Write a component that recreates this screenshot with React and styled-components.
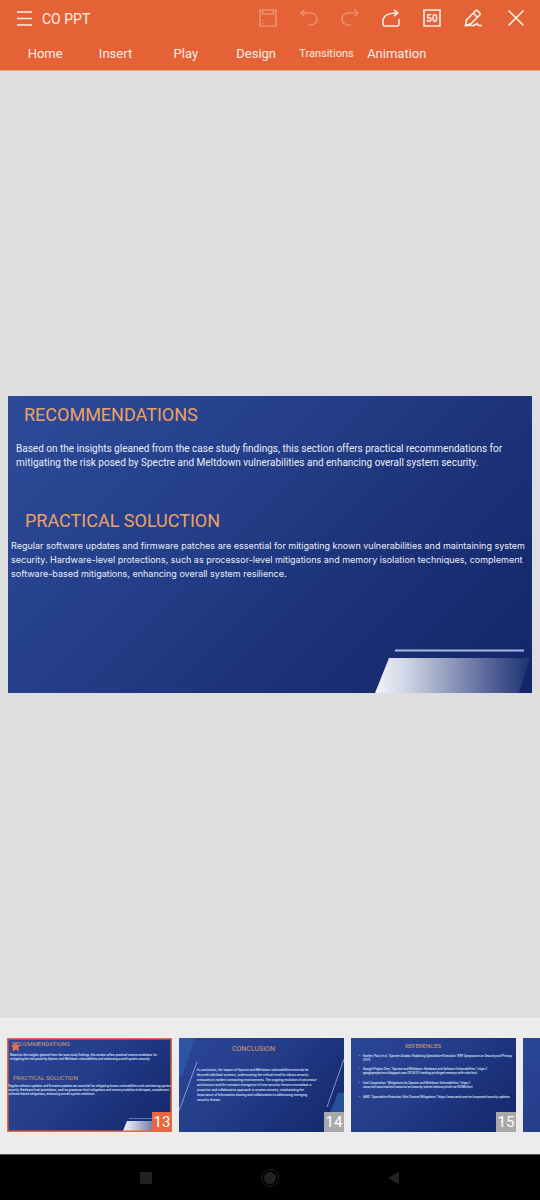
import React from "react";
import styled, { createGlobalStyle } from "styled-components";

const GlobalStyle = createGlobalStyle`
  *, *::before, *::after { box-sizing: border-box; }
  body { margin: 0; background: #dedede; font-family: Roboto, "Liberation Sans", sans-serif; }
  h1, h2, h3, p, ul { margin: 0; padding: 0; font-weight: 400; }
  button { font: inherit; color: inherit; background: none; border: 0; padding: 0; cursor: pointer; }
`;

const Page = styled.div`
  min-height: 100vh;
  display: flex;
  flex-direction: column;
  overflow: hidden;
`;

const Header = styled.header`
  background: #e46236;
  color: #fdeee6;
  border-bottom: 1px solid #e8a78e;
`;

const TitleBar = styled.div`
  height: 36px;
  padding: 0 12px;
  display: flex;
  align-items: center;
`;

const DocTitle = styled.h1`
  flex: 1;
  padding-left: 6px;
  font-size: 14px;
  line-height: 16px;
  padding-top: 2px;
`;

const ToolGroup = styled.div`
  display: flex;
  gap: 17px;
  margin-right: 19px;
`;

const IconButton = styled.button`
  width: 24px;
  height: 24px;
  display: grid;
  place-items: center;
  &:disabled { opacity: 0.32; }
  svg { display: block; }
`;

const Tabs = styled.nav`
  display: flex;
  padding: 1px 20% 0 10px;
  height: 34px;
`;

const Tab = styled.button`
  flex: 1 1 0;
  min-width: 0;
  text-align: center;
  white-space: nowrap;
  font-size: ${(p) => (p.$small ? 11 : 13)}px;
  line-height: 16px;
`;

const Stage = styled.main`
  flex: 1;
  display: flex;
  align-items: center;
  padding: 0 8px;
  background: #dedede;
`;

const SlideFrame = styled.article`
  position: relative;
  width: 100%;
  aspect-ratio: 524 / 297;
  overflow: hidden;
  color: #e9eefb;
  background: linear-gradient(135deg, #2e4b9a 0%, #233d86 42%, #1a2f75 72%, #12256a 100%);
`;

const Art = styled.svg`
  position: absolute;
  inset: 0;
  width: 100%;
  height: 100%;
`;

const SlideBody = styled.div`
  position: relative;
  padding: 8px 0 0 3px;
`;

const SlideHeading = styled.h2`
  padding-left: ${(p) => p.$indent}px;
  color: #eca262;
  font-size: 18px;
  line-height: 22px;
`;

const SlideText = styled.p`
  padding: ${(p) => p.$pad};
  font-family: ${(p) => (p.$compact ? "Inter, Roboto, sans-serif" : "inherit")};
  font-size: ${(p) => (p.$compact ? 9 : 10)}px;
  line-height: 14px;
  white-space: nowrap;
`;

const Line = styled.span`
  display: block;
`;

const Strip = styled.footer`
  display: flex;
  gap: 7px;
  height: 136px;
  padding: 20px 0 0 7px;
  background: #ececec;
  overflow: hidden;
`;

const Thumb = styled.button`
  position: relative;
  flex: 0 0 165px;
  height: 94px;
  overflow: hidden;
  text-align: left;
  color: #dfe6fa;
  background: linear-gradient(135deg, #2b4696 0%, #233d8a 45%, #1a3079 72%, #14286c 100%);
  display: flex;
  flex-direction: column;
  justify-content: flex-start;
`;

const SelectedRing = styled.span`
  position: absolute;
  inset: 0;
  border: 1px solid #e9673f;
  box-shadow: inset 0 0 0 1px #e9673f88;
`;

const ThumbHeading = styled.span`
  display: block;
  position: relative;
  font-size: ${(p) => p.$size || 6}px;
  line-height: 8px;
  color: #dc9a72;
  padding: ${(p) => p.$pad};
`;

const ThumbText = styled.span`
  display: block;
  position: relative;
  font-family: ${(p) => (p.$wide ? "Inter, Roboto, sans-serif" : "inherit")};
  font-weight: ${(p) => (p.$wide ? 600 : 500)};
  font-size: 3px;
  line-height: ${(p) => p.$lead || 4}px;
  white-space: nowrap;
  padding: ${(p) => p.$pad};
`;

const RefItem = styled.span`
  display: flex;
  gap: 3px;
  margin-bottom: ${(p) => p.$gap}px;
`;

const Badge = styled.span`
  position: absolute;
  right: 0;
  bottom: 0;
  width: 20px;
  height: 20px;
  text-align: center;
  font-size: 15px;
  line-height: 20px;
  color: #fff;
  background: ${(p) => (p.$active ? "#e9673f" : "#a9a9a9")};
`;

const StarMark = styled.svg`
  position: absolute;
  left: 3px;
  top: 3px;
  width: 12px;
  height: 12px;
`;

const NavBar = styled.nav`
  height: 46px;
  display: flex;
  justify-content: space-between;
  align-items: center;
  padding: 0 25%;
  background: #000;
  border-top: 1px solid #555;
`;

const NavButton = styled.button`
  width: 22px;
  height: 22px;
  svg { display: block; }
`;

const Glyph = ({ children, size = 20 }) => (
  <svg width={size} height={size} viewBox="0 0 20 20" fill="none" stroke="currentColor" strokeWidth="1.6" aria-hidden="true">
    {children}
  </svg>
);

const tools = [
  { name: "Save", disabled: true, icon: <><path d="M2 2h16v16H2z" /><path d="M4.500 2v4h11V2M5 12v1M5 15v1" /></> },
  { name: "Undo", disabled: true, icon: <><path d="M5.500 1.500 2 5l3.500 3.500" /><path d="M2 5h10a6 6 0 0 1 0 12H9" /></> },
  { name: "Redo", disabled: true, icon: <><path d="m14.500 1.500 3.500 3.500-3.500 3.500" /><path d="M18 5H8a6 6 0 0 0 0 12H11" /></> },
  { name: "Share", icon: <><path d="M2 11v5q0 2 2 2h12q2 0 2-2v-5" /><path d="M2 11.500C3 7 7 5 16.500 5M13 1.800 16.800 5 13 8.200" /></> },
  {
    name: "Slides",
    icon: <><path d="M2 2h16v16H2z" /><text x="10" y="13.500" fontSize="10" fontWeight="700" textAnchor="middle" fill="currentColor" stroke="none">50</text></>,
  },
  { name: "Edit", icon: <><path d="M2.500 17.500 3.500 12 12.800 2.600q.8-.8 1.600 0l2.500 2.500q.8.800 0 1.600L8 15.800z" /><path d="m10.500 5.200 4 4M2.500 17.500h8.500l3-2 1.500 2H19" /></> },
];

const tabs = ["Home", "Insert", "Play", "Design", "Transitions", "Animation"];

const BannerArt = ({ id }) => (
  <Art viewBox="0 0 524 297" preserveAspectRatio="none" aria-hidden="true">
    <defs>
      <linearGradient id={id}>
        <stop offset="0" stopColor="#f2f4fa" />
        <stop offset="0.2" stopColor="#d0d5e5" />
        <stop offset="0.6" stopColor="#7582ac" />
        <stop offset="1" stopColor="#1c3072" />
      </linearGradient>
    </defs>
    <path d="M387 254.500h129" stroke="#a9b6e4" strokeWidth="1.800" />
    <path d="M381 262h141l-11 35H367z" fill={`url(#${id})`} />
  </Art>
);

const StripesArt = () => (
  <Art viewBox="0 0 165 94" aria-hidden="true">
    <path d="M0 0h16L4 36 0 40z" fill="#3161ae" opacity=".6" />
    <path d="M165 55h-6l-9 22v17h15z" fill="#3161ae" opacity=".7" />
    <path d="M18 24 0 73M165 21l-17 48" stroke="#9eb0e2" strokeWidth=".8" />
  </Art>
);

const Lines = ({ of }) => of.map((t) => <Line key={t}>{t}</Line>);

const recommendation = [
  "Based on the insights gleaned from the case study findings, this section offers practical recommendations for",
  "mitigating the risk posed by Spectre and Meltdown vulnerabilities and enhancing overall system security.",
];
const solution = [
  "Regular software updates and firmware patches are essential for mitigating known vulnerabilities and maintaining system",
  "security. Hardware-level protections, such as processor-level mitigations and memory isolation techniques, complement",
  "software-based mitigations, enhancing overall system resilience.",
];
const conclusion = [
  "In conclusion, the impact of Spectre and Meltdown vulnerabilities extends far",
  "beyond individual systems, underscoring the critical need for robust security",
  "measures in modern computing environments. The ongoing evolution of processor",
  "architecture and the constant emergence of new security threats necessitate a",
  "proactive and collaborative approach to system security, emphasizing the",
  "importance of information sharing and collaboration in addressing emerging",
  "security threats.",
];
const references = [
  { gap: 5, lines: ["Kocher, Paul, et al. \"Spectre Attacks: Exploiting Speculative Execution\" IEEE Symposium on Security and Privacy", "2019."] },
  { gap: 6, lines: ["Google Project Zero. \"Spectre and Meltdown: Hardware and Software Vulnerabilities.\" https://", "googleprojectzero.blogspot.com/2018/01/reading-privileged-memory-with-side.html"] },
  { gap: 6, lines: ["Intel Corporation. \"Mitigations for Spectre and Meltdown Vulnerabilities.\" https://", "www.intel.com/content/www/us/en/security-center/advisory/intel-sa-00088.html"] },
  { gap: 0, lines: ["AMD. \"Speculative Execution Side Channel Mitigations.\" https://www.amd.com/en/corporate/security-updates"] },
];

export default function App() {
  return (
    <Page>
      <GlobalStyle />
      <Header>
        <TitleBar>
          <IconButton aria-label="Menu">
            <Glyph><path d="M3 4h15M3 10.500h15M3 17h15" /></Glyph>
          </IconButton>
          <DocTitle>CO PPT</DocTitle>
          <ToolGroup>
            {tools.map((t) => (
              <IconButton key={t.name} aria-label={t.name} disabled={t.disabled}>
                <Glyph>{t.icon}</Glyph>
              </IconButton>
            ))}
          </ToolGroup>
          <IconButton aria-label="Close">
            <Glyph><path d="m2.500 2.500 15 15M17.500 2.500l-15 15" /></Glyph>
          </IconButton>
        </TitleBar>
        <Tabs>
          {tabs.map((t) => <Tab key={t} $small={t === "Transitions"}>{t}</Tab>)}
        </Tabs>
      </Header>

      <Stage>
        <SlideFrame>
          <BannerArt id="banner" />
          <SlideBody>
            <SlideHeading $indent={13}>RECOMMENDATIONS</SlideHeading>
            <SlideText $pad="16px 0 40px 5px"><Lines of={recommendation} /></SlideText>
            <SlideHeading $indent={14}>PRACTICAL SOLUCTION</SlideHeading>
            <SlideText $compact $pad="7px 0 0"><Lines of={solution} /></SlideText>
          </SlideBody>
        </SlideFrame>
      </Stage>

      <Strip>
        <Thumb aria-label="Slide 13">
          <BannerArt id="banner-thumb" />
          <ThumbHeading $pad="2px 0 0 5px">RECOMMENDATIONS</ThumbHeading>
          <ThumbText $pad="5px 0 13px 3px"><Lines of={recommendation} /></ThumbText>
          <ThumbHeading $pad="0 0 0 6px">PRACTICAL SOLUCTION</ThumbHeading>
          <ThumbText $pad="2px 0 0 1px"><Lines of={solution} /></ThumbText>
          <SelectedRing />
          <StarMark viewBox="0 0 12 12" aria-hidden="true">
            <path d="m5 1 1.500 3h4L8 6.500l1.500 4L6 8.500l-3.500 2L3 6.500.500 4.500H4z" fill="#ee6b45" />
          </StarMark>
          <Badge $active>13</Badge>
        </Thumb>
        <Thumb aria-label="Slide 14">
          <StripesArt />
          <ThumbHeading $size={7} $pad="7px 0 0 53px">CONCLUSION</ThumbHeading>
          <ThumbText $wide $lead={5} $pad="15px 0 0 18px"><Lines of={conclusion} /></ThumbText>
          <Badge>14</Badge>
        </Thumb>
        <Thumb aria-label="Slide 15">
          <ThumbHeading $pad="4px 0 0 54px">REFERENCES</ThumbHeading>
          <ThumbText $pad="4px 0 0 8px">
            {references.map((r) => (
              <RefItem key={r.lines[0]} $gap={r.gap}>
                <span>•</span>
                <span><Lines of={r.lines} /></span>
              </RefItem>
            ))}
          </ThumbText>
          <Badge>15</Badge>
        </Thumb>
        <Thumb aria-label="Slide 16" />
      </Strip>

      <NavBar>
        <NavButton aria-label="Recent apps">
          <svg width="22" height="22" viewBox="0 0 22 22"><path d="M5 5h12v12H5z" fill="#222" /></svg>
        </NavButton>
        <NavButton aria-label="Home screen">
          <svg width="22" height="22" viewBox="0 0 22 22"><circle cx="11" cy="11" r="8.500" fill="none" stroke="#222" /><circle cx="11" cy="11" r="6" fill="#222" /></svg>
        </NavButton>
        <NavButton aria-label="Back">
          <svg width="22" height="22" viewBox="0 0 22 22"><path d="M16 4.500v13L5 11z" fill="#222" /></svg>
        </NavButton>
      </NavBar>
    </Page>
  );
}
